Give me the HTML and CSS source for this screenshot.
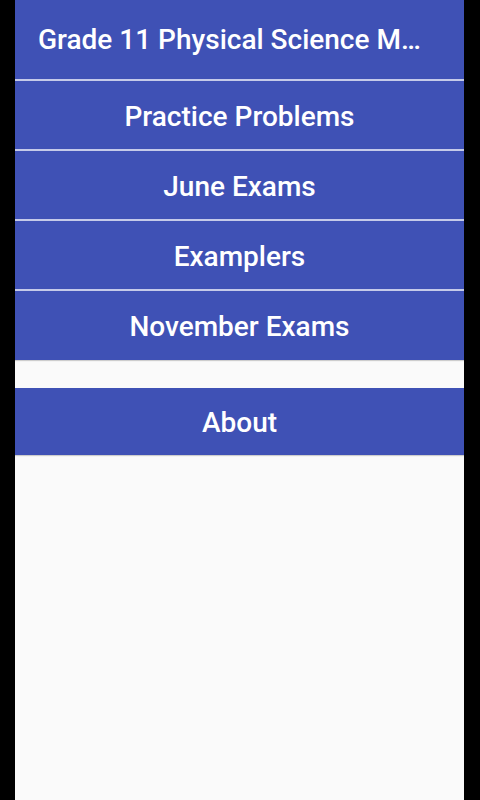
FILE: index.html
```html
<!DOCTYPE html>
<html lang="en">
<head>
    <meta charset="UTF-8">
    <meta name="viewport" content="width=device-width, initial-scale=1.0">
    <title>Grade 11 Physical Science Memos</title>
    <link rel="stylesheet" href="styles.css">
</head>
<body>
    <div class="screen">
        <header class="toolbar">
            <h1 class="toolbar-title">Grade 11 Physical Science M…</h1>
        </header>

        <div class="menu">
            <button class="menu-item" type="button">Practice Problems</button>
            <button class="menu-item" type="button">June Exams</button>
            <button class="menu-item" type="button">Examplers</button>
            <button class="menu-item last" type="button">November Exams</button>
        </div>

        <button class="menu-item about" type="button">About</button>
    </div>
</body>
</html>
```

FILE: styles.css
```css
body {
    margin: 0;
    background: #000;
    font-family: Roboto, "Noto Sans", sans-serif;
}

.screen {
    width: 449px;
    height: 800px;
    margin-left: 15px;
    background-color: #fafafa;
    display: flex;
    flex-direction: column;
}

.toolbar {
    height: 79px;
    background-color: #3f51b5;
    border-bottom: 2px solid #c5cae9;
    display: flex;
    align-items: center;
    padding: 0 20px 0 23px;
}

.toolbar-title {
    margin: 0;
    color: #fff;
    font-size: 28px;
    font-weight: 500;
    white-space: nowrap;
}

.menu {
    display: flex;
    flex-direction: column;
}

.menu-item {
    display: block;
    width: 100%;
    height: 70px;
    margin: 0;
    padding: 2px 0 0;
    border: none;
    border-bottom: 2px solid #c5cae9;
    background-color: #3f51b5;
    color: #fff;
    font-family: Roboto, "Noto Sans", sans-serif;
    font-size: 28px;
    font-weight: 500;
    cursor: pointer;
}

.menu-item.last {
    height: 69px;
    border-bottom: none;
    box-shadow: 0 1px 1px rgba(0, 0, 0, 0.18);
}

.menu-item.about {
    height: 67px;
    margin-top: 28px;
    border-bottom: none;
    box-shadow: 0 1px 1px rgba(0, 0, 0, 0.18);
}
```
